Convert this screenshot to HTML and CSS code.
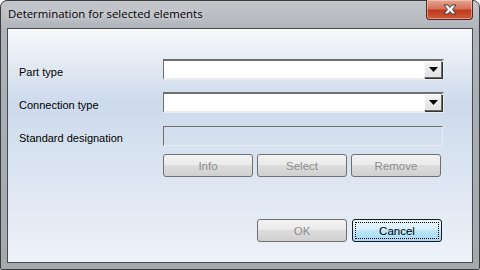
FILE: index.html
```html
<!DOCTYPE html>
<html>
<head>
<meta charset="utf-8">
<link rel="stylesheet" href="styles.css">
</head>
<body>
<div class="window">
  <div class="titlebar">
    <span class="title">Determination for selected elements</span>
    <div class="close">
      <svg width="16" height="11" viewBox="0 0 16 11"><path d="M2 1 H6 L8 3.5 L10 1 H14 L10.5 5.5 L14 10 H10 L8 7.5 L6 10 H2 L5.5 5.5 Z" fill="#fff" stroke="#3b3b3b" stroke-width="1"/></svg>
    </div>
  </div>
  <div class="content">
    <div class="row">
      <span class="label">Part type</span>
      <div class="combo"><div class="dd"><svg width="9" height="5" viewBox="0 0 9 5"><path d="M0 0 H9 L4.5 5 Z" fill="#000"/></svg></div></div>
    </div>
    <div class="row r2">
      <span class="label">Connection type</span>
      <div class="combo"><div class="dd"><svg width="9" height="5" viewBox="0 0 9 5"><path d="M0 0 H9 L4.5 5 Z" fill="#000"/></svg></div></div>
    </div>
    <div class="row r3">
      <span class="label">Standard designation</span>
      <div class="field"></div>
    </div>
    <div class="btnrow">
      <button class="btn" disabled>Info</button>
      <button class="btn" disabled>Select</button>
      <button class="btn" disabled>Remove</button>
    </div>
    <div class="footer">
      <button class="btn" disabled>OK</button>
      <button class="btn def"><span class="focus">Cancel</span></button>
    </div>
  </div>
</div>
</body>
</html>
```
FILE: styles.css
```css
* { box-sizing: border-box; }
html, body { margin: 0; padding: 0; width: 480px; height: 270px; overflow: hidden; background: #fff; }
.window {
  width: 480px; height: 270px;
  border: 1px solid #3c3c3c;
  border-radius: 7px 7px 2px 2px;
  background: linear-gradient(to bottom, #c4c7cc 0%, #aeb3b9 12%, #a9aeb4 50%, #a4a9ae 100%);
  padding: 0 6px 6px 6px;
  display: flex; flex-direction: column;
  font-family: "Liberation Sans", Arial, sans-serif;
}
.titlebar {
  height: 27px;
  display: flex; justify-content: space-between; align-items: flex-start;
}
.title {
  font-family: "Open Sans", "Noto Sans", sans-serif;
  font-size: 11.4px; color: #000;
  margin-top: 5px; margin-left: 1px;
  text-shadow: 0 0 6px rgba(255,255,255,0.8);
}
.close {
  width: 47px; height: 20px;
  margin-top: -1px;
  border: 1px solid #57291e;
  border-top: none;
  border-radius: 0 0 4px 4px;
  background: linear-gradient(to bottom, #e8a593 0%, #d3735c 45%, #c0391d 55%, #cc5b3c 100%);
  box-shadow: inset 0 0 0 1px rgba(255,220,210,0.5);
  display: flex; align-items: center; justify-content: center;
}
.content {
  flex: 1;
  border: 1px solid #4a4a4a;
  background: linear-gradient(to bottom, #f7f9fc 0%, #dfe7f2 18%, #cddaec 32%, #d6e1ef 50%, #e2e9f4 75%, #edf1f9 100%);
  padding: 30px 0 0 11px;
  display: flex; flex-direction: column;
  font-size: 11px; color: #000;
}
.row { display: flex; align-items: center; height: 21px; }
.r2 { margin-top: 12px; }
.r3 { margin-top: 13px; height: 20px; }
.label { width: 144px; padding-top: 4px; }
.combo {
  width: 281px; height: 21px;
  background: #fff;
  border-top: 2px solid #6f6f6f; border-left: 1px solid #6f6f6f;
  border-right: 2px solid #e9ecf0; border-bottom: 2px solid #e9ecf0;
  display: flex; justify-content: flex-end;
}
.dd {
  width: 18px; height: 17px;
  background: linear-gradient(#f4f4f4, #e0e0e0);
  border-top: 1px solid #fff; border-left: 1px solid #fff;
  border-right: 1px solid #6a6a6a; border-bottom: 1px solid #6a6a6a;
  box-shadow: 1px 1px 0 #333;
  display: flex; align-items: center; justify-content: center;
}
.field {
  width: 280px; height: 20px;
  border-top: 1px solid #6f6f6f; border-left: 1px solid #6f6f6f;
  border-right: 1px solid #e6ebf2; border-bottom: 1px solid #e6ebf2;
}
.btnrow { display: flex; gap: 4px; margin: 8px 0 0 144px; }
.btn {
  width: 90px; height: 23px;
  border: 1px solid #707070; border-radius: 3px;
  background: linear-gradient(to bottom, #f2f2f2 0%, #ebebeb 45%, #dddddd 50%, #cfcfcf 100%);
  font-family: "Liberation Sans", Arial, sans-serif;
  font-size: 11.5px; color: #8d8d8d;
  padding: 0;
  display: flex; align-items: center; justify-content: center;
}
.footer { display: flex; gap: 5px; margin: 42px 0 0 238px; }
.btn.def {
  border-color: #1b1b1b;
  background: linear-gradient(to bottom, #eaf6fd 0%, #d9f0fc 45%, #bee6fd 50%, #a7d9f5 100%);
  color: #000;
  padding: 2px;
}
.focus {
  flex: 1; align-self: stretch;
  border: 1px dotted #000;
  display: flex; align-items: center; justify-content: center;
}
```
